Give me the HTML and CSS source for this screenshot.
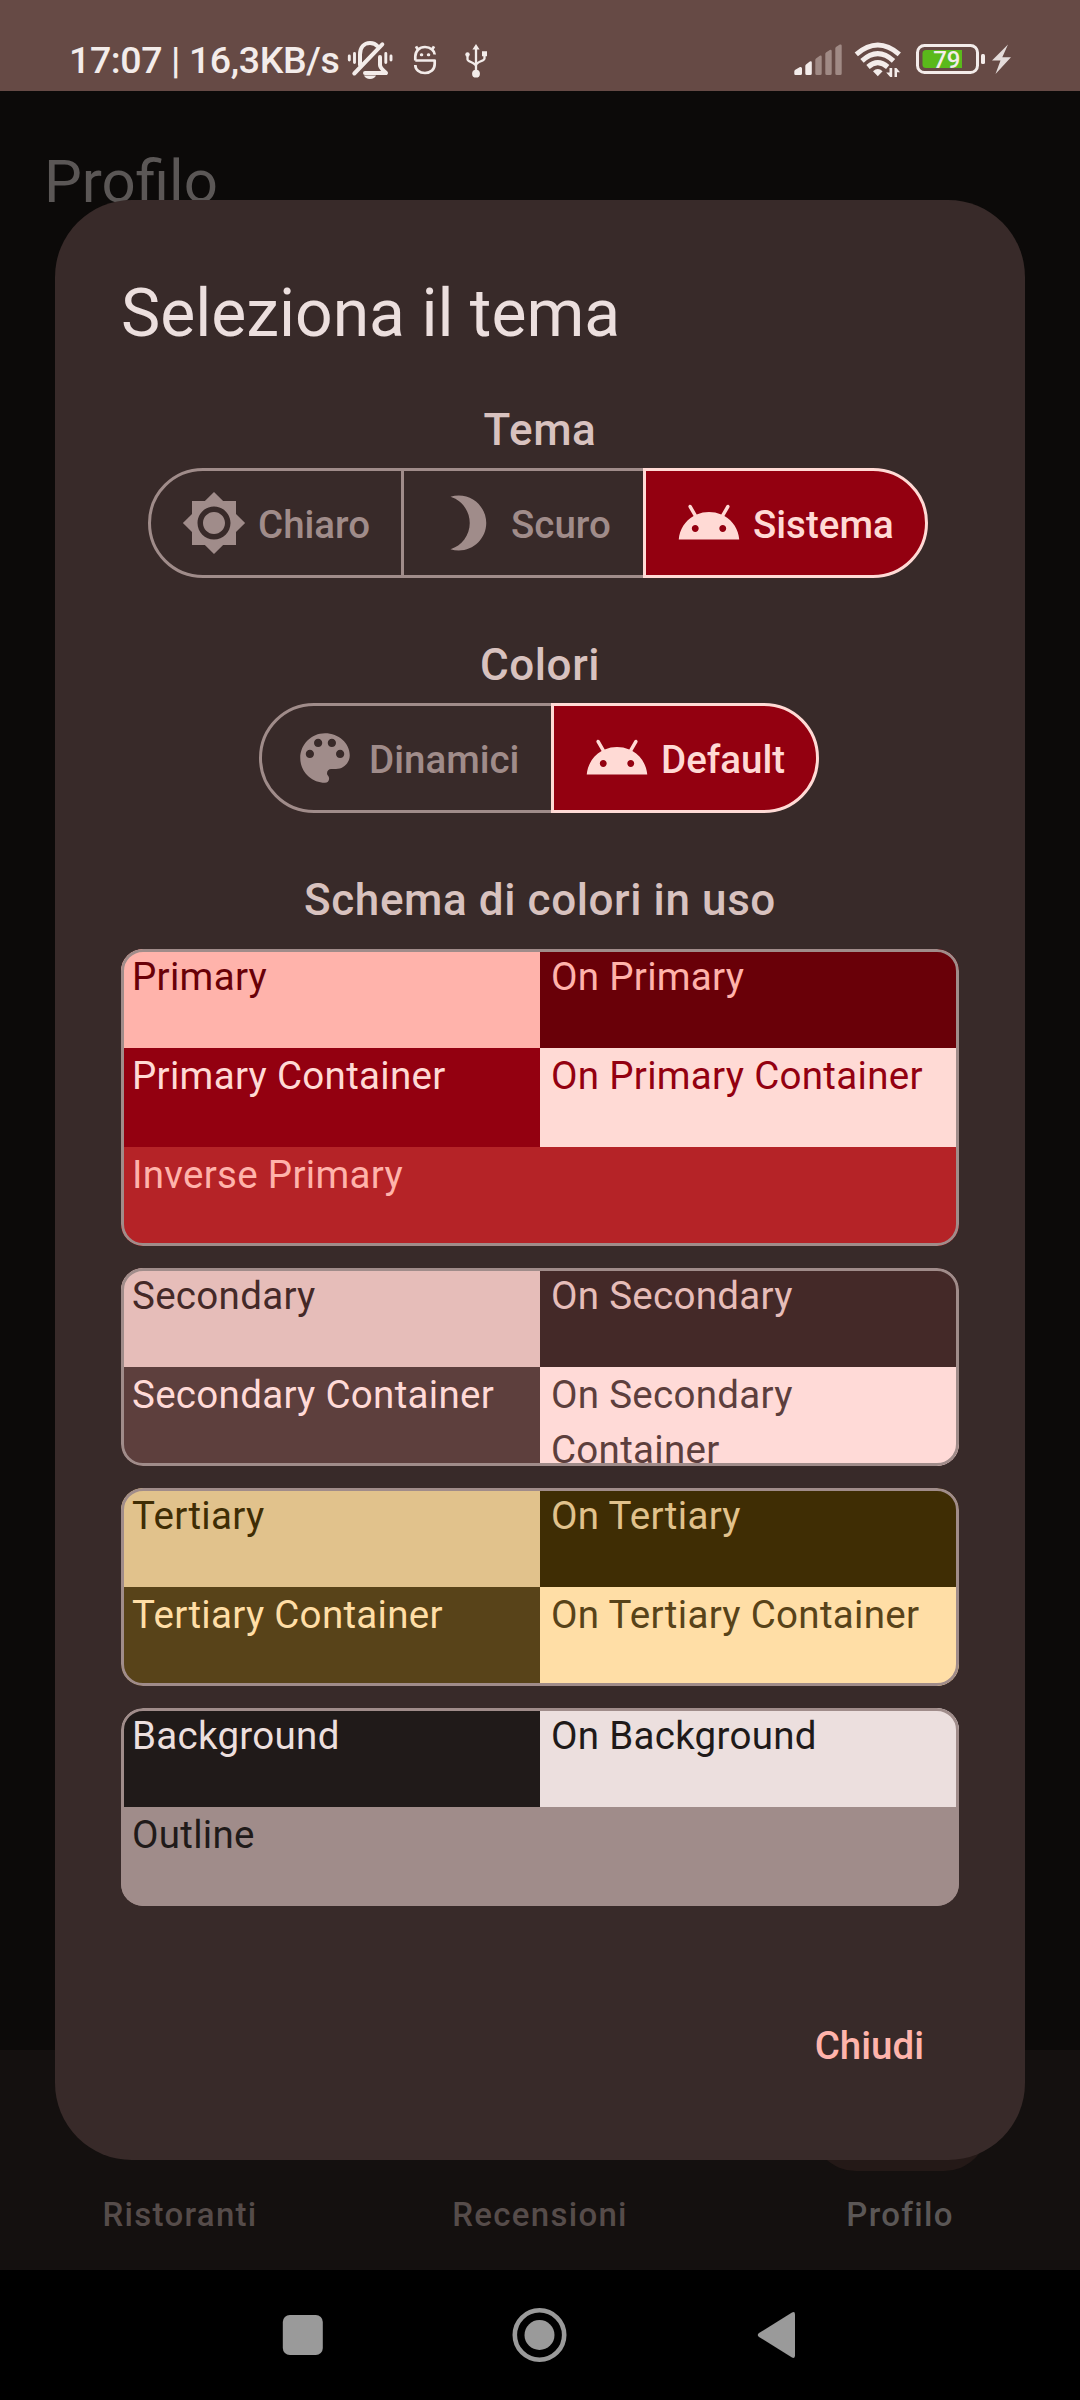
FILE: index.html
```
<!DOCTYPE html>
<html lang="it">
<head>
<meta charset="utf-8">
<title>Profilo</title>
<link rel="stylesheet" href="styles.css">
</head>
<body>
<svg class="defs" width="0" height="0" aria-hidden="true">
  <symbol id="android" viewBox="0 0 24 24"><path d="M17.6 9.48l1.84-3.18c.16-.31.04-.69-.26-.85-.29-.15-.65-.06-.83.22l-1.88 3.24c-2.86-1.21-6.08-1.21-8.94 0L5.65 5.67c-.19-.29-.58-.38-.87-.2-.28.18-.37.54-.22.83L6.4 9.48C3.3 11.25 1.28 14.44 1 18h22c-.28-3.56-2.3-6.75-5.4-8.52zM7 15.25c-.69 0-1.25-.56-1.25-1.25s.56-1.25 1.25-1.25 1.25.56 1.25 1.25-.56 1.25-1.25 1.25zm10 0c-.69 0-1.25-.56-1.25-1.25s.56-1.25 1.25-1.25 1.25.56 1.25 1.25-.56 1.25-1.25 1.25z"/></symbol>
</svg>
<div class="screen">
  <header class="status">
    <span class="clock">17:07 | 16,3KB/s</span>
    <svg class="status-left" width="140" height="44" viewBox="347 38 140 44" fill="none" stroke="#f3ecea" stroke-linecap="round" stroke-linejoin="round">
      <path d="M349.300 56v4M354.500 53.500v9M385.800 53.500v9M391 56v4" stroke-width="2.900"/>
      <path d="M360 65V54.500C360 47.500 364 43 370 43c3.500 0 6 1.300 7.800 3.500M382.300 44.300L354.300 73.500" stroke-width="4"/>
      <path d="M380 57v8c0 3 3 5 6 8h-21" stroke-width="4"/>
      <path d="M364 75.500h12c-1 2.300-3 3.500-6 3.500s-5-1.200-6-3.500z" fill="#f3ecea" stroke="none"/>
      <path d="M415.300 56.500c0-5.500 4-9.500 9.700-9.500s9.700 4 9.700 7.500M415.300 60.500h19.400v3.500c0 5.500-4 9-9.700 9s-9.700-3.500-9.700-8M415.300 56.500v4M417.500 49l-1.500-2.700M432.500 49l1.500-2.700" stroke-width="2.700" stroke-linecap="butt"/>
      <path d="M421.300 54.800h.5M428.300 54.800h.5" stroke-width="3"/>
      <path d="M476 48v25M467.500 56v3.500c0 2.200 8.500 3.200 8.500 7M484.500 54.500v4c0 2.700-8.500 3-8.500 7" stroke-width="2.300"/>
      <path d="M476 44l3.600 5.500h-7.200zM482 51.300h5v5h-5z" fill="#f3ecea" stroke="none"/>
      <circle cx="467.500" cy="54.500" r="2.200" fill="#f3ecea" stroke="none"/><circle cx="476" cy="73.700" r="3.900" fill="#f3ecea" stroke="none"/>
    </svg>
    <svg class="status-right" width="222" height="44" viewBox="792 38 222 44" fill="#f3ecea">
      <path d="M794.300 75v-3.500q0-1 1-1.700l4.700-2.800q2-.5 2 1.500v5q0 1.500-1.500 1.500h-5q-1.200 0-1.200-1zM805.300 73.500V66q0-1 1-1.700l3.500-2.800q2-.8 2 1v11q0 1.500-1.500 1.500h-3.500q-1.500 0-1.500-1.500z"/>
      <path fill="#a08a85" d="M815.300 73.500V60q0-1 1-1.700l3.500-2.500q1.900-.8 1.900 1.200v16.500q0 1.500-1.500 1.500h-3.400q-1.500 0-1.500-1.500zM825.300 73.500V54q0-1 1-1.700l3.500-2.300q1.900-.6 1.900 1.200v22.300q0 1.500-1.500 1.500h-3.400q-1.500 0-1.500-1.500zM835.300 73.500V48.500q0-1 1-1.700l3.500-2.200q1.900-.6 1.900 1.200v27.700q0 1.500-1.500 1.500h-3.400q-1.500 0-1.500-1.500z"/>
      <g fill="none" stroke="#f3ecea" stroke-width="5"><path d="M856.300 54.300q21.500-18.600 43 0"/><path d="M862 60.800q15.800-14.400 31.500 0"/><path d="M868 67q9.800-8.600 19.700 0"/></g>
      <path d="M873 71.300q4.800-4.600 9.600 0l-4.800 5zM889.500 68h2.700v9h-2l-4-4.500h3.300zM894.500 68h2l3.500 4.300h-3v4.700h-2.500z"/>
      <rect x="917.500" y="45.500" width="60" height="27" rx="7" fill="none" stroke="#f3ecea" stroke-width="3"/>
      <path d="M962 50v18h-36q-3.500 0-3.500-3.500v-11q0-3.500 3.500-3.500z" fill="#5ab91b"/>
      <rect x="981" y="54" width="4" height="10" rx="1.500"/>
      <text class="battery-text" x="946.800" y="67.500" text-anchor="middle">79</text>
      <path fill="#e4dcda" d="M1008 44.500l-16 16h8.500l-5 13.500 15.500-16.800h-8.700z"/>
    </svg>
  </header>
  <main class="page"><h1 class="page-title">Profilo</h1></main>
  <nav class="tabs">
    <div class="tab">Ristoranti</div>
    <div class="tab">Recensioni</div>
    <div class="tab tab-on"><span class="pill"></span>Profilo</div>
  </nav>
  <footer class="sysnav">
    <svg width="1080" height="130" viewBox="0 0 1080 130" fill="#9a9a9a">
      <rect x="282.800" y="45" width="40" height="40" rx="7"/>
      <circle cx="539.500" cy="65" r="24.700" fill="none" stroke="#9a9a9a" stroke-width="4.600"/><circle cx="539.500" cy="65" r="15"/>
      <path d="M795 44.500v41q0 3.500-3 2l-33-20.500q-2.500-2 0-4l33-20.500q3-1.500 3 2z"/>
    </svg>
  </footer>

  <section class="dialog">
    <h2 class="title">Seleziona il tema</h2>
    <h3 class="label">Tema</h3>
    <div class="segments theme">
      <div class="seg seg-light"><svg class="icon" viewBox="0 0 24 24"><path d="M20 8.690V4h-4.690L12 .69 8.690 4H4v4.690L.69 12 4 15.310V20h4.690L12 23.310 15.310 20H20v-4.690L23.310 12 20 8.690zM12 18c-3.310 0-6-2.690-6-6s2.690-6 6-6 6 2.690 6 6-2.690 6-6 6zm0-10c-2.210 0-4 1.790-4 4s1.790 4 4 4 4-1.790 4-4-1.790-4-4-4z"/></svg><span>Chiaro</span></div>
      <div class="seg seg-dark"><svg class="icon" viewBox="0 0 24 24"><path d="M9 2c-1.050 0-2.050.16-3 .46 4.060 1.270 7 5.060 7 9.540 0 4.480-2.940 8.270-7 9.540.95.3 1.950.46 3 .46 5.520 0 10-4.480 10-10S14.520 2 9 2z"/></svg><span>Scuro</span></div>
      <div class="seg seg-system on"><svg class="icon"><use href="#android"/></svg><span>Sistema</span></div>
    </div>
    <h3 class="label">Colori</h3>
    <div class="segments colors">
      <div class="seg seg-dynamic"><svg class="icon" viewBox="0 0 24 24"><path d="M12 3c-4.970 0-9 4.030-9 9s4.030 9 9 9c.83 0 1.500-.67 1.500-1.500 0-.39-.15-.74-.39-1.010-.23-.26-.38-.61-.38-.99 0-.83.67-1.500 1.500-1.500H16c2.760 0 5-2.240 5-5 0-4.420-4.030-8-9-8zm-5.500 9c-.83 0-1.500-.67-1.500-1.500S5.670 9 6.500 9 8 9.670 8 10.500 7.330 12 6.500 12zm3-4C8.670 8 8 7.330 8 6.500S8.670 5 9.500 5s1.500.67 1.500 1.500S10.330 8 9.500 8zm5 0c-.83 0-1.500-.67-1.500-1.500S13.670 5 14.500 5s1.500.67 1.500 1.500S15.330 8 14.500 8zm3 4c-.83 0-1.500-.67-1.500-1.500S16.670 9 17.500 9s1.500.67 1.500 1.500-.67 1.500-1.500 1.500z"/></svg><span>Dinamici</span></div>
      <div class="seg seg-default on"><svg class="icon"><use href="#android"/></svg><span>Default</span></div>
    </div>
    <h3 class="label">Schema di colori in uso</h3>
    <div class="schemes">
      <div class="scheme">
        <div class="cell primary">Primary</div><div class="cell on-primary">On Primary</div>
        <div class="cell primary-c">Primary Container</div><div class="cell on-primary-c">On Primary Container</div>
        <div class="cell wide inverse">Inverse Primary</div>
      </div>
      <div class="scheme">
        <div class="cell secondary">Secondary</div><div class="cell on-secondary">On Secondary</div>
        <div class="cell secondary-c">Secondary Container</div><div class="cell on-secondary-c">On Secondary<br>Container</div>
      </div>
      <div class="scheme">
        <div class="cell tertiary">Tertiary</div><div class="cell on-tertiary">On Tertiary</div>
        <div class="cell tertiary-c">Tertiary Container</div><div class="cell on-tertiary-c">On Tertiary Container</div>
      </div>
      <div class="scheme">
        <div class="cell background">Background</div><div class="cell on-background">On Background</div>
        <div class="cell wide outline">Outline</div>
      </div>
    </div>
    <div class="actions"><span class="close">Chiudi</span></div>
  </section>
</div>
</body>
</html>
```

FILE: styles.css
```
* { box-sizing: border-box; }
body { margin: 0; background: #000; font-family: Roboto, sans-serif; }
h1, h2, h3 { margin: 0; }
.defs { position: absolute; }
svg { display: block; flex: none; }
.screen { position: relative; display: flex; flex-direction: column; width: 1080px; height: 2400px; overflow: hidden; }

.status { display: flex; height: 91px; padding: 38px 66px 0 69px; background: #664a45; }
.clock { width: 278px; line-height: 44px; font-size: 37.5px; font-weight: 500; letter-spacing: -0.4px; color: #f3ecea; white-space: nowrap; }
.status-right { margin-left: auto; }
.battery-text { font: 500 24px Roboto, sans-serif; }

.page { flex: 1; padding: 52px 44px; background: #0c0a09; }
.page-title { font-size: 60px; line-height: 77px; font-weight: 400; color: #5b5756; }

.tabs { display: flex; height: 220px; background: #14100f; }
.tab { position: relative; flex: 1; padding-top: 143px; text-align: center; font-size: 33px; line-height: 44px; font-weight: 500; letter-spacing: 1.3px; color: #564c4a; }
.tab-on { color: #5b5756; }
.pill { position: absolute; left: 92px; top: 33px; width: 176px; height: 88px; border-radius: 44px; background: #241917; }
.sysnav { height: 130px; background: #000; }

.dialog { position: absolute; left: 55px; top: 200px; width: 970px; height: 1960px; padding: 66px; border-radius: 77px; background: #382a29; }
.title { height: 131px; font-size: 66px; line-height: 96px; font-weight: 400; color: #ecdfde; }
.label { height: 71px; text-align: center; font-size: 44px; line-height: 66px; font-weight: 500; letter-spacing: 0.6px; color: #d8c2bf; }
.segments { display: flex; justify-content: center; height: 110px; margin-bottom: 54px; }
.theme { padding-right: 4px; }
.colors { padding-right: 2px; }
.seg { display: flex; align-items: center; gap: 11px; height: 110px; padding-left: 30px; border: 3px solid #a08c8a; font-size: 38.5px; font-weight: 500; color: #a08c8a; white-space: nowrap; }
.seg span { padding-top: 2px; }
.seg + .seg { margin-left: -3px; }
.seg:first-child { border-radius: 55px 0 0 55px; }
.seg:last-child { border-radius: 0 55px 55px 0; }
.seg.on { border-color: #ffdad5; background: #930010; color: #ffdad5; }
.icon { width: 66px; height: 66px; fill: currentColor; }
.seg-light { width: 256px; }
.seg-dark { width: 245px; }
.seg-system { width: 285px; }
.seg-dynamic { width: 295px; }
.seg-default { width: 268px; }

.schemes { display: flex; flex-direction: column; gap: 22px; margin-top: 11px; }
.scheme { position: relative; display: grid; grid-template-columns: 1fr 1fr; grid-auto-rows: 99px; border-radius: 22px; overflow: hidden; }
.scheme::after { content: ""; position: absolute; inset: 0; border: 3px solid #a08c8a; border-radius: 22px; }
.cell { padding: 0 11px; overflow: hidden; font-size: 38.5px; line-height: 55px; letter-spacing: 0.3px; }
.wide { grid-column: span 2; }
.primary { background: #ffb3ab; color: #690008; }
.on-primary { background: #690008; color: #ffb3ab; }
.primary-c { background: #930010; color: #ffdad5; }
.on-primary-c { background: #ffdad5; color: #930010; }
.inverse { background: #b52327; color: #ffb3ab; }
.secondary { background: #e6bdb9; color: #442928; }
.on-secondary { background: #442928; color: #e6bdb9; }
.secondary-c { background: #5d3f3d; color: #ffdad7; }
.on-secondary-c { background: #ffdad7; color: #5d3f3d; }
.tertiary { background: #e1c28c; color: #3f2d04; }
.on-tertiary { background: #3f2d04; color: #e1c28c; }
.tertiary-c { background: #584319; color: #ffdea6; }
.on-tertiary-c { background: #ffdea6; color: #584319; }
.background { background: #201a19; color: #ecdfde; }
.on-background { background: #ecdfde; color: #201a19; }
.outline { background: #a08c8a; color: #201a19; }

.actions { display: flex; justify-content: flex-end; margin-top: 112px; padding-right: 35px; }
.close { font-size: 38.5px; line-height: 55px; font-weight: 500; color: #ffb4ac; }
```
